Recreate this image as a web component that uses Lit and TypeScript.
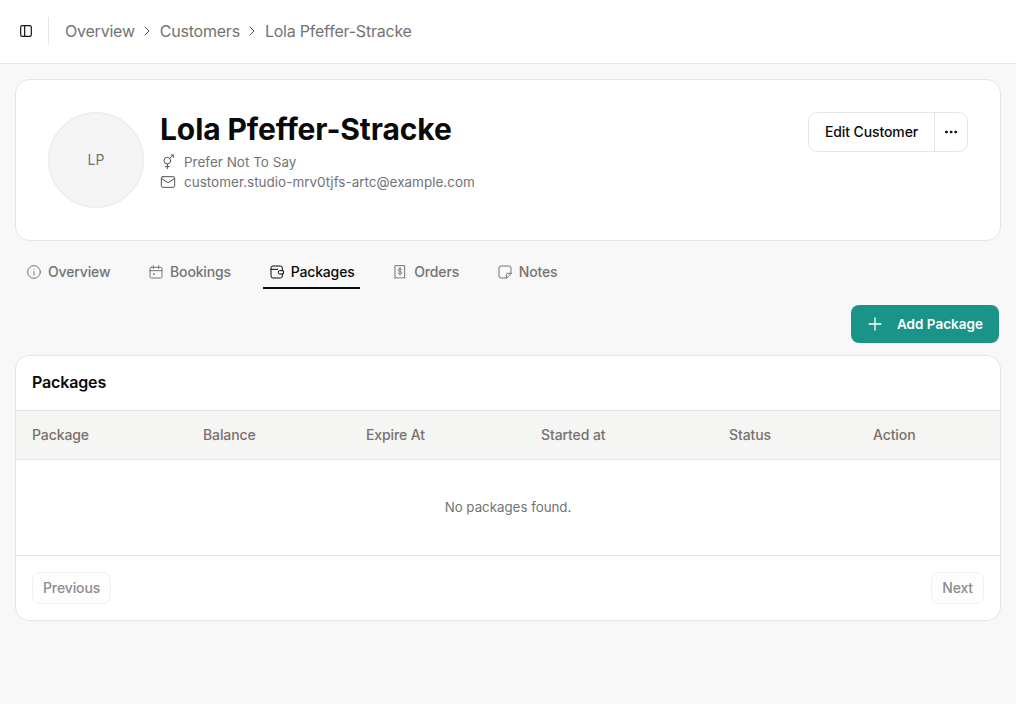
import { LitElement, html, css, svg } from "lit";
import { customElement } from "lit/decorators.js";

const ic = (body: unknown, size = 16, sw = 1.5) => html`<svg width=${size} height=${size} viewBox="0 0 24 24" fill="none" stroke="currentColor" stroke-width=${sw} stroke-linecap="round" stroke-linejoin="round">${body}</svg>`;

const icons = {
  panel: svg`<rect x="4" y="4" width="16" height="16" rx="2.500"/><path d="M10 4v16"/>`,
  chevron: svg`<path d="m9 6 6 6-6 6"/>`,
  gender: svg`<circle cx="11" cy="10" r="5"/><path d="M11 15v7M8 19h6M15 6l4.500-4M17 1.500h3V5"/>`,
  mail: svg`<rect x="2" y="4" width="20" height="16" rx="2.500"/><path d="m2.500 7 9.500 6 9.500-6"/>`,
  dots: svg`<circle cx="5" cy="12" r="1.400" fill="currentColor"/><circle cx="12" cy="12" r="1.400" fill="currentColor"/><circle cx="19" cy="12" r="1.400" fill="currentColor"/>`,
  info: svg`<circle cx="12" cy="12" r="9.500"/><path d="M12 16.500V11.500M12 8h.01"/>`,
  calendar: svg`<rect x="3" y="5" width="18" height="16" rx="2"/><path d="M8 2.500v4M16 2.500v4M3 10h18"/><rect x="7.500" y="14" width="2.500" height="2.500" fill="currentColor" stroke="none"/>`,
  wallet: svg`<path d="M20 9V6a3 3 0 0 0-3-3H6a3 3 0 0 0-3 3v12a3 3 0 0 0 3 3h11a3 3 0 0 0 3-3v-3"/><path d="M3 8h10"/><path d="M21 10h-5a2 2 0 0 0-2 2v1a2 2 0 0 0 2 2h5z"/>`,
  receipt: svg`<path d="M5 2.500h14v19l-2.300-1.500-2.300 1.500-2.400-1.500-2.400 1.500-2.300-1.500L5 21.500z"/><path d="M14.500 8.500c-.5-1-1.400-1.500-2.500-1.500-1.400 0-2.500.7-2.500 2s1.100 1.700 2.500 2 2.500.8 2.500 2-1.100 2-2.500 2c-1.100 0-2-.5-2.500-1.500M12 5.500v11"/>`,
  note: svg`<path d="M21 14V6a3 3 0 0 0-3-3H6a3 3 0 0 0-3 3v12a3 3 0 0 0 3 3h8z"/><path d="M21 14h-5a2 2 0 0 0-2 2v5"/>`,
  plus: svg`<path d="M12 3v18M3 12h18"/>`,
};

const tabs = [
  ["Overview", icons.info, false],
  ["Bookings", icons.calendar, false],
  ["Packages", icons.wallet, true],
  ["Orders", icons.receipt, false],
  ["Notes", icons.note, false],
] as const;

const cols = ["Package", "Balance", "Expire At", "Started at", "Status", "Action"];

@customElement("app-root")
export class AppRoot extends LitElement {
  static styles = css`
    :host { display: block; height: 704px; background: #f8f8f8; font-family: Inter, "Liberation Sans", sans-serif; color: #0a0a0a; }
    * { box-sizing: border-box; }
    .top { height: 64px; background: #fff; border-bottom: 1px solid #e7e7e7; display: flex; align-items: center; padding: 0 0 1px 18px; }
    .toggle { display: flex; color: #171717; }
    .sep { width: 1px; height: 28px; background: #e5e5e5; margin: 0 16px 0 14px; }
    .crumbs { display: flex; align-items: center; font-size: 16px; color: #737373; letter-spacing: -0.22px; }
    .crumbs svg { margin: 0 4.5px; color: #525252; }
    main { padding: 15px 15px 0; }
    .profile { height: 162px; background: #fff; border: 1px solid #e5e5e5; border-radius: 14px; padding: 32px; display: flex; gap: 16px; }
    .avatar { width: 96px; height: 96px; border-radius: 50%; background: #f5f5f5; border: 1px solid #e8e8e8; display: grid; place-items: center; font-size: 14px; color: #737373; padding-bottom: 1px; }
    .info { flex: 1; }
    h1 { margin: -1px 0 0; font-size: 30px; line-height: 36px; font-weight: 700; letter-spacing: -0.1px; }
    .meta { display: flex; align-items: center; gap: 8px; font-size: 13.5px; line-height: 20px; color: #737373; }
    .meta svg { color: #525252; flex: none; }
    .meta.first { margin-top: 5px; }
    .group { display: flex; height: 40px; border: 1px solid #e5e5e5; border-radius: 10px; background: #fff; font-size: 14px; font-weight: 500; letter-spacing: -0.1px; }
    .group .edit { width: 126px; display: grid; place-items: center; border-right: 1px solid #e5e5e5; padding-bottom: 1px; }
    .group .more { width: 32px; display: grid; place-items: center; }
    .tabs { display: flex; gap: 25.7px; margin-top: 16px; padding-left: 5px; height: 32px; }
    .tab { position: relative; display: flex; align-items: center; gap: 6px; padding: 0 6px 3px; font-size: 14px; font-weight: 500; color: #737373; height: 32px; letter-spacing: -0.15px; }
    .tab.on { color: #0a0a0a; }
    .tab.on::after { content: ""; position: absolute; left: 0; right: 1px; bottom: 0; height: 2px; background: #0a0a0a; }
    .actions { display: flex; justify-content: flex-end; margin-top: 16px; padding-right: 2px; }
    .add { width: 148px; height: 38px; border-radius: 8px; background: #1a9488; color: #fff; display: flex; align-items: center; font-size: 13.5px; font-weight: 600; padding-left: 16px; gap: 14px; }
    .card { margin-top: 12px; height: 266px; background: #fff; border: 1px solid #e5e5e5; border-radius: 14px; overflow: hidden; }
    .title { height: 55px; padding: 0 0 2px 16px; display: flex; align-items: center; font-size: 16px; font-weight: 600; letter-spacing: -0.15px; border-bottom: 1px solid #e5e5e5; }
    .head { height: 49px; background: #f5f5f4; border-bottom: 1px solid #e5e5e5; display: grid; grid-template-columns: 171px 163px 175px 188px 144px 1fr; padding: 0 0 1px 16px; align-items: center; font-size: 14px; font-weight: 500; color: #78716c; letter-spacing: -0.1px; }
    .empty { height: 96px; border-bottom: 1px solid #e5e5e5; display: grid; place-items: center; font-size: 13.3px; color: #737373; padding-bottom: 2px; }
    .foot { display: flex; justify-content: space-between; padding: 16px; }
    .pg { height: 32px; padding: 0 10px 1px; border: 1px solid #f0f0f0; border-radius: 8px; display: grid; place-items: center; font-size: 14px; font-weight: 500; color: #8c8c8c; background: #fdfdfd; letter-spacing: -0.12px; }
  `;

  render() {
    return html`
      <div class="top">
        <span class="toggle">${ic(icons.panel, 16, 1.8)}</span>
        <span class="sep"></span>
        <div class="crumbs">
          <span>Overview</span>${ic(icons.chevron)}<span>Customers</span>${ic(icons.chevron)}<span>Lola Pfeffer-Stracke</span>
        </div>
      </div>
      <main>
        <section class="profile">
          <div class="avatar">LP</div>
          <div class="info">
            <h1>Lola Pfeffer-Stracke</h1>
            <div class="meta first">${ic(icons.gender)}<span>Prefer Not To Say</span></div>
            <div class="meta">${ic(icons.mail)}<span>customer.studio-mrv0tjfs-artc@example.com</span></div>
          </div>
          <div class="group">
            <span class="edit">Edit Customer</span>
            <span class="more">${ic(icons.dots, 16)}</span>
          </div>
        </section>
        <nav class="tabs">
          ${tabs.map(([label, icon, on]) => html`<div class="tab ${on ? "on" : ""}">${ic(icon)}<span>${label}</span></div>`)}
        </nav>
        <div class="actions">
          <div class="add">${ic(icons.plus, 16, 2)}<span>Add Package</span></div>
        </div>
        <section class="card">
          <div class="title">Packages</div>
          <div class="head">${cols.map((c) => html`<span>${c}</span>`)}</div>
          <div class="empty">No packages found.</div>
          <div class="foot">
            <span class="pg">Previous</span>
            <span class="pg">Next</span>
          </div>
        </section>
      </main>
    `;
  }
}
